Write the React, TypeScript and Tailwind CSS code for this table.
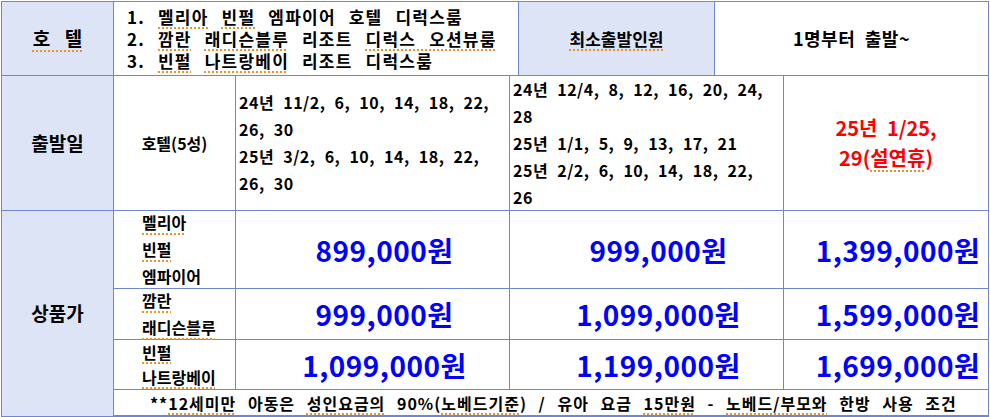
import React from "react";

const font = { fontFamily: '"Noto Sans CJK KR", "Noto Sans", sans-serif' };

function Sq({ children }: { children: React.ReactNode }) {
  return (
    <span className="underline decoration-dotted decoration-[#f0902c] decoration-[1.5px] underline-offset-[4px]">
      {children}
    </span>
  );
}

function Price({ value }: { value: string }) {
  return (
    <div className="flex items-center justify-center bg-white pl-6 text-[28px] font-bold tracking-[0.5px] text-[#0000ff]">
      {value}
    </div>
  );
}

export default function App() {
  return (
    <div className="min-h-screen bg-white p-px text-black" style={font}>
      <div className="flex w-[988px] flex-col gap-px bg-[#6f87cf] p-px">
        {/* Top row: hotels */}
        <div className="grid h-[73px] grid-cols-[111px_404px_195px_273px] gap-px">
          <div className="flex items-center justify-center bg-[#dde4f6] text-[19px] font-bold">
            <span className="[word-spacing:10px]">
              <Sq>호 텔</Sq>
            </span>
          </div>
          <div className="flex flex-col justify-center bg-white pl-[13px] text-[17px] font-bold leading-[22px] tracking-[1.2px] [word-spacing:8px] whitespace-nowrap">
            <div>1. <Sq>멜리아</Sq> <Sq>빈펄</Sq> 엠파이어 호텔 디럭스룸</div>
            <div>2. <Sq>깜란</Sq> <Sq>래디슨블루</Sq> 리조트 <Sq>디럭스 오션뷰룸</Sq></div>
            <div>3. <Sq>빈펄</Sq> <Sq>나트랑베이</Sq> 리조트 디럭스룸</div>
          </div>
          <div className="flex items-center justify-center bg-[#dde4f6] text-[17px] font-bold">
            <Sq>최소출발인원</Sq>
          </div>
          <div className="flex items-center justify-center bg-white text-[18px] font-bold tracking-[0.5px] [word-spacing:5px]">
            1명부터 출발~
          </div>
        </div>

        {/* Dates and prices */}
        <div className="grid grid-cols-[111px_121px_273px_273px_204px] grid-rows-[134px_77px_50px_49px_25px] gap-px">
          <div className="flex items-center justify-center bg-[#dde4f6] text-[19px] font-bold">
            출발일
          </div>
          <div className="flex items-center justify-center bg-white text-[16px] font-bold">
            호텔(5성)
          </div>
          <div className="flex flex-col justify-center bg-white pl-[3px] text-[16px] font-semibold leading-[27px] tracking-[0.5px] [word-spacing:5px] whitespace-nowrap">
            <div>24년 11/2, 6, 10, 14, 18, 22,</div>
            <div>26, 30</div>
            <div>25년 3/2, 6, 10, 14, 18, 22,</div>
            <div>26, 30</div>
          </div>
          <div className="flex flex-col justify-center overflow-hidden bg-white pl-[3px] text-[16px] font-semibold leading-[27px] tracking-[0.5px] [word-spacing:5px] whitespace-nowrap">
            <div>24년 12/4, 8, 12, 16, 20, 24,</div>
            <div>28</div>
            <div>25년 1/1, 5, 9, 13, 17, 21</div>
            <div>25년 2/2, 6, 10, 14, 18, 22,</div>
            <div>26</div>
          </div>
          <div className="flex flex-col items-center justify-center bg-white text-[20px] font-bold leading-[30px] text-[#ff0000] [word-spacing:5px]">
            <div>25년 1/25,</div>
            <div>29(<Sq>설연휴</Sq>)</div>
          </div>

          <div className="row-span-5 flex items-center justify-center bg-[#dde4f6] text-[19px] font-bold">
            상품가
          </div>

          <div className="flex flex-col justify-center bg-white pl-[28px] text-[16px] font-bold leading-[27px]">
            <div><Sq>멜리아</Sq></div>
            <div><Sq>빈펄</Sq></div>
            <div>엠파이어</div>
          </div>
          <Price value="899,000원" />
          <Price value="999,000원" />
          <Price value="1,399,000원" />

          <div className="flex flex-col justify-center bg-white pl-[28px] text-[16px] font-bold leading-[27px]">
            <div><Sq>깜란</Sq></div>
            <div><Sq>래디슨블루</Sq></div>
          </div>
          <Price value="999,000원" />
          <Price value="1,099,000원" />
          <Price value="1,599,000원" />

          <div className="flex flex-col justify-center bg-white pl-[28px] text-[16px] font-bold leading-[25px]">
            <div><Sq>빈펄</Sq></div>
            <div><Sq>나트랑베이</Sq></div>
          </div>
          <Price value="1,099,000원" />
          <Price value="1,199,000원" />
          <Price value="1,699,000원" />

          <div className="col-span-4 flex items-center bg-white pl-[36px] text-[16px] font-semibold tracking-[1px] whitespace-nowrap">
            <span className="[word-spacing:7px]">
              **<Sq>12세미만</Sq> 아동은 <Sq>성인요금의</Sq> 90%(<Sq>노베드기준</Sq>) / 유아 요금 <Sq>15만원</Sq> - <Sq>노베드/부모와</Sq> 한방 사용 조건
            </span>
          </div>
        </div>
      </div>
    </div>
  );
}
